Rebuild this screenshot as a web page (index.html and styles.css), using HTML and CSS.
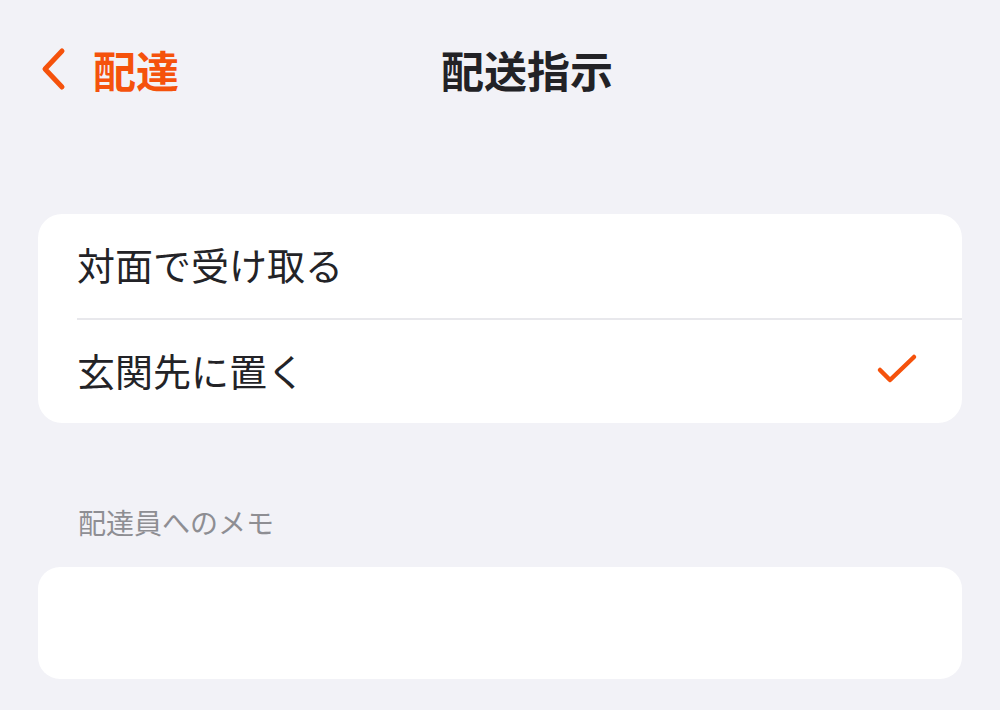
FILE: index.html
```html
<!DOCTYPE html>
<html lang="ja">
<head>
<meta charset="utf-8">
<link rel="stylesheet" href="styles.css">
</head>
<body>
<div class="screen">
  <header class="nav">
    <a class="back">
      <svg class="chev" width="30" height="44" viewBox="0 0 30 44"><path d="M24 4 L7 22 L24 40" fill="none" stroke="currentColor" stroke-width="5" stroke-linecap="round" stroke-linejoin="round"/></svg>
      <span class="back-label">配達</span>
    </a>
    <h1 class="title">配送指示</h1>
  </header>

  <section class="group">
    <div class="row"><span class="row-text">対面で受け取る</span></div>
    <div class="row"><span class="row-text">玄関先に置く</span>
      <svg class="check" width="42" height="32" viewBox="0 0 42 32"><path d="M4 17 L14 27 L38 4" fill="none" stroke="currentColor" stroke-width="4.5" stroke-linecap="round" stroke-linejoin="round"/></svg>
    </div>
  </section>

  <div class="section-label">配達員へのメモ</div>
  <section class="group memo"></section>
</div>
</body>
</html>
```

FILE: styles.css
```css
html, body {
  margin: 0;
  padding: 0;
  background: #f2f2f7;
}
body {
  font-family: "Noto Sans CJK JP", "Noto Sans", sans-serif;
  color: #1c1c1e;
}
.screen {
  width: 1000px;
  height: 710px;
  overflow: hidden;
}
.nav {
  position: relative;
  height: 144px;
  display: flex;
  align-items: center;
  padding-left: 38px;
  box-sizing: border-box;
}
.back {
  display: flex;
  align-items: center;
  color: #f5520c;
  margin-top: -6px;
}
.chev {
  display: block;
}
.back-label {
  margin-left: 25px;
  font-size: 43px;
  font-weight: 700;
  line-height: 1;
}
.title {
  position: absolute;
  left: 527px;
  top: 69px;
  transform: translate(-50%, -50%);
  margin: 0;
  font-size: 43px;
  font-weight: 700;
  line-height: 1;
  white-space: nowrap;
  color: #222226;
}
.group {
  margin: 70px 38px 0;
  background: #fff;
  border-radius: 24px;
  padding-left: 39px;
  overflow: hidden;
}
.row {
  height: 104px;
  display: flex;
  align-items: center;
  justify-content: space-between;
  padding-right: 44px;
  box-sizing: border-box;
}
.row + .row {
  border-top: 2px solid #e8e8ec;
  height: 105px;
}
.row-text {
  font-size: 38px;
  line-height: 1;
  margin-top: -4px;
  color: #232327;
}
.check {
  color: #f5520c;
  display: block;
  margin-top: -6px;
}
.section-label {
  margin: 79px 0 0 78px;
  font-size: 28px;
  line-height: 40px;
  color: #8e8e93;
}
.group.memo {
  margin-top: 25px;
  height: 112px;
  border-radius: 22px;
}
```
